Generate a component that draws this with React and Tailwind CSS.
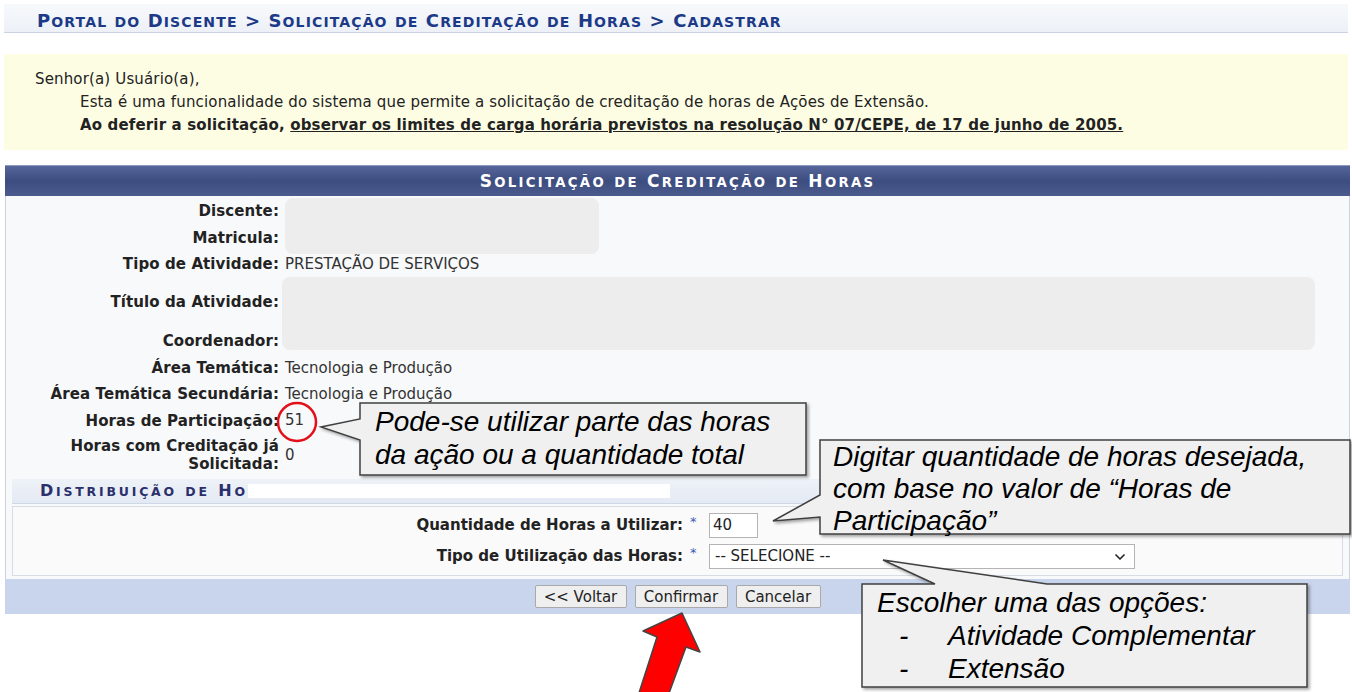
import { ChevronDown } from 'lucide-react';

const verdana = { fontFamily: '"DejaVu Sans", Verdana, sans-serif' };

// versalete feito à mão: maiúscula inicial no tamanho cheio, resto em caixa alta menor
const SmallCaps = ({ text }) =>
  text.split(' ').map((w, i) => {
    const first = w.charAt(0);
    const isUpper = first !== first.toLowerCase() || first === '>';
    return (
      <span key={i}>
        {i > 0 && ' '}
        {isUpper ? first : <span className="text-[0.78em]">{first.toUpperCase()}</span>}
        <span className="text-[0.78em]">{w.slice(1).toUpperCase()}</span>
      </span>
    );
  });

const Row = ({ label, children, h = 'h-[27px]' }) => (
  <>
    <div className={`${h} flex items-center justify-end text-right font-bold text-[15px] tracking-[0.1px] text-[#222] leading-[18px]`}>{label}</div>
    <div className={`${h} flex items-center text-[15px] text-[#333]`}>{children}</div>
  </>
);

const Callouts = () => (
  <svg className="absolute left-0 top-0 pointer-events-none" width="1352" height="692" viewBox="0 0 1352 692">
    <defs>
      <filter id="sh" x="-5%" y="-5%" width="110%" height="115%">
        <feDropShadow dx="2" dy="2" stdDeviation="1.5" floodColor="#000" floodOpacity="0.35" />
      </filter>
    </defs>
    {/* circle around 51 */}
    <ellipse cx="297" cy="422" rx="19" ry="19" fill="none" stroke="#e3101a" strokeWidth="2.5" />
    <path d="M360,403 H806 V475 H360 V440 L321,427 L360,419 Z" fill="#f0f0f0" stroke="#404040" strokeWidth="1.5" filter="url(#sh)" />
    <path d="M820,440 H1350 V534 H820 V517 L773,521 L820,495 Z" fill="#f0f0f0" stroke="#404040" strokeWidth="1.5" filter="url(#sh)" />
    <path d="M862,584 H935 L883,560 L1047,584 H1307 V687 H862 Z" fill="#f0f0f0" stroke="#404040" strokeWidth="1.5" filter="url(#sh)" />
    {/* red arrow */}
    <path d="M682,613 L700,652 L686,647 L668,696 L638,696 L657,637 L643,631 Z" fill="#ff0000" stroke="#444" strokeWidth="1.5" strokeLinejoin="round" />
  </svg>
);

const calloutFont = { fontFamily: '"Liberation Sans", Arial, sans-serif' };

export default function App() {
  return (
    <div className="relative w-[1352px] h-[692px] overflow-hidden bg-white px-[4px]" style={verdana}>
      {/* breadcrumb */}
      <div className="mt-[4px] h-[29px] flex items-center pl-[33px] pt-[4px] bg-gradient-to-b from-[#f7f9fc] to-[#edf1f7] border-b border-[#c9d3e2]">
        <span className="font-bold text-[18px] text-[#1c3a87] tracking-[1.1px]">
          <SmallCaps text="Portal do Discente > Solicitação de Creditação de Horas > Cadastrar" />
        </span>
      </div>

      {/* aviso */}
      <div className="mt-[21px] h-[96px] bg-[#fdfde4] pt-[14px] pl-[31px] text-[15px] tracking-[0.15px] text-[#222] leading-[23px]">
        <div>Senhor(a) Usuário(a),</div>
        <div className="pl-[45px]">Esta é uma funcionalidade do sistema que permite a solicitação de creditação de horas de Ações de Extensão.</div>
        <div className="pl-[45px] font-bold">
          Ao deferir a solicitação, <span className="underline">observar os limites de carga horária previstos na resolução N° 07/CEPE, de 17 de junho de 2005.</span>
        </div>
      </div>

      {/* tabela */}
      <div className="mt-[15px] ml-[1px] w-[1345px]">
        <div className="h-[31px] flex items-center justify-center pt-[1px] bg-gradient-to-b from-[#56669a] via-[#3d4d80] to-[#4b5b8d] border-t border-[#8f9bbd]">
          <span className="text-white font-bold text-[17px] tracking-[2.3px]">
            <SmallCaps text="Solicitação de Creditação de Horas" />
          </span>
        </div>
        <div className="bg-[#f8f9fb] border-x border-[#ccd3de]">
          <div className="grid grid-cols-[273px_1fr] gap-x-[6px] pt-[1px]">
            <Row label="Discente:"><div className="w-[314px] h-[56px] mt-[1px] self-start rounded-[8px] bg-[#ededed]" /></Row>
            <Row label="Matricula:"><span /></Row>
            <Row label="Tipo de Atividade:" h="h-[26px]">PRESTAÇÃO DE SERVIÇOS</Row>
            <Row label="Título da Atividade:" h="h-[50px]"><div className="w-[1033px] h-[73px] self-start rounded-[8px] bg-[#ededed] -ml-[3px]" /></Row>
            <Row label="Coordenador:" h="h-[28px]"><span /></Row>
            <Row label="Área Temática:" h="h-[26px]">Tecnologia e Produção</Row>
            <Row label="Área Temática Secundária:" h="h-[26px]">Tecnologia e Produção</Row>
            <Row label="Horas de Participação:" h="h-[27px]">51</Row>
            <Row label={<span>Horas com Creditação já<br />Solicitada:</span>} h="h-[42px]">0</Row>
          </div>

          <div className="mt-[3px] mx-[6px] h-[25px] flex items-center pl-[28px] bg-gradient-to-b from-[#eef2f8] to-[#e4eaf4] border-b border-[#cfd8e6]">
            <span className="font-bold text-[16px] text-[#2b2f6b] tracking-[2.8px]">
              <SmallCaps text="Distribuição de Ho" />
            </span>
            <span className="w-[422px] h-[14px] bg-white" />
          </div>

          <div className="mx-[6px] mt-[2px] bg-[#fafafa] border border-[#d8dde5] py-[3px]">
            <div className="grid grid-cols-[670px_26px_1fr] items-center">
              <div className="h-[31px] flex items-center justify-end font-bold text-[15px] text-[#222]">Quantidade de Horas a Utilizar:</div>
              <div className="h-[31px] pl-[7px] pt-[2px] text-[#3b5bb5] text-[13px]">*</div>
              <div className="h-[31px] flex items-center">
                <div className="w-[49px] h-[25px] bg-white border border-[#b4b4b4] flex items-center pl-[3px] text-[15px] text-[#222]">40</div>
              </div>
              <div className="h-[31px] flex items-center justify-end font-bold text-[15px] text-[#222]">Tipo de Utilização das Horas:</div>
              <div className="h-[31px] pl-[7px] pt-[2px] text-[#3b5bb5] text-[13px]">*</div>
              <div className="h-[31px] flex items-center">
                <div className="w-[426px] h-[25px] bg-white border border-[#b4b4b4] flex items-center justify-between pl-[5px] pr-[6px] text-[15px] text-[#222]">
                  <span>-- SELECIONE --</span>
                  <ChevronDown size={16} strokeWidth={2.5} />
                </div>
              </div>
            </div>
          </div>
          <div className="h-[3px]" />
        </div>
        <div className="h-[35px] bg-[#c9d5ec] flex items-center justify-center gap-[8px]">
          <button className="w-[92px] h-[23px] bg-[#efefef] border border-[#a9a9a9] rounded-[2px] text-[15px] text-[#222]">&lt;&lt; Voltar</button>
          <button className="w-[93px] h-[23px] bg-[#efefef] border border-[#a9a9a9] rounded-[2px] text-[15px] text-[#222]">Confirmar</button>
          <button className="w-[85px] h-[23px] bg-[#efefef] border border-[#a9a9a9] rounded-[2px] text-[15px] text-[#222]">Cancelar</button>
        </div>
      </div>

      <Callouts />

      {/* textos dos balões */}
      <div className="absolute left-[375px] top-[405px] italic text-[28px] leading-[33px] text-black" style={calloutFont}>
        <div>Pode-se utilizar parte das horas</div>
        <div>da ação ou a quantidade total</div>
      </div>
      <div className="absolute left-[833px] top-[441px] italic text-[28px] leading-[32px] text-black" style={calloutFont}>
        <div>Digitar quantidade de horas desejada,</div>
        <div>com base no valor de “Horas de</div>
        <div>Participação”</div>
      </div>
      <div className="absolute left-[877px] top-[586px] italic text-[28px] leading-[33px] text-black" style={calloutFont}>
        <div>Escolher uma das opções:</div>
        <div className="flex"><span className="w-[71px] pl-[22px]">-</span><span>Atividade Complementar</span></div>
        <div className="flex"><span className="w-[71px] pl-[22px]">-</span><span>Extensão</span></div>
      </div>
    </div>
  );
}
